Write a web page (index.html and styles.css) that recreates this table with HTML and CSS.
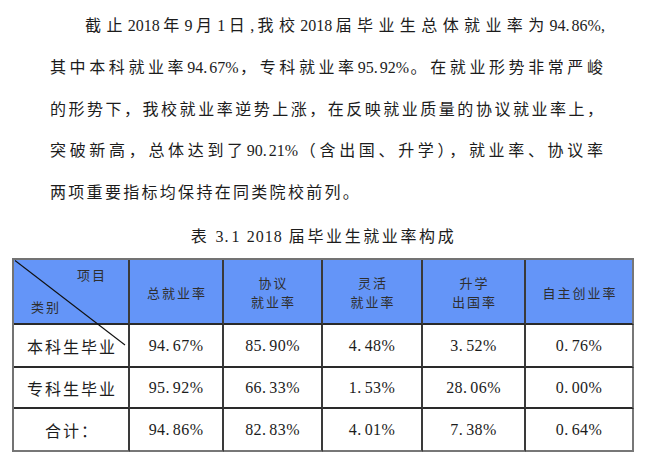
FILE: index.html
```html
<!DOCTYPE html>
<html lang="zh-CN">
<head>
<meta charset="utf-8">
<link rel="stylesheet" href="styles.css">
</head>
<body>
<div class="para">
  <div class="line first">截止<span class="n">2018</span>年<span class="n">9</span>月<span class="n">1</span>日<span class="n">,</span>我校<span class="n">2018</span>届毕业生总体就业率为<span class="n">94<span class="dot">.</span>86%,</span></div>
  <div class="line">其中本科就业率<span class="n">94<span class="dot">.</span>67%</span>，专科就业率<span class="n">95<span class="dot">.</span>92%</span>。在就业形势非常严峻</div>
  <div class="line">的形势下，我校就业率逆势上涨，在反映就业质量的协议就业率上，</div>
  <div class="line">突破新高，总体达到了<span class="n">90<span class="dot">.</span>21%</span>（含出国、升学），就业率、协议率</div>
  <div class="line last">两项重要指标均保持在同类院校前列。</div>
</div>
<div class="title">表 <span class="n">3<span class="dot">.</span>1</span> <span class="n">2018</span> 届毕业生就业率构成</div>
<div class="table">
  <div class="cell head corner">
    <div class="c-top">项目</div>
    <div class="c-bottom">类别</div>
  </div>
  <div class="cell head">总就业率</div>
  <div class="cell head"><div>协议</div><div>就业率</div></div>
  <div class="cell head"><div>灵活</div><div>就业率</div></div>
  <div class="cell head"><div>升学</div><div>出国率</div></div>
  <div class="cell head endcol">自主创业率</div>

  <div class="cell label">本科生毕业</div>
  <div class="cell num">94<span class="dot">.</span>67%</div>
  <div class="cell num">85<span class="dot">.</span>90%</div>
  <div class="cell num">4<span class="dot">.</span>48%</div>
  <div class="cell num">3<span class="dot">.</span>52%</div>
  <div class="cell num endcol">0<span class="dot">.</span>76%</div>

  <div class="cell label">专科生毕业</div>
  <div class="cell num">95<span class="dot">.</span>92%</div>
  <div class="cell num">66<span class="dot">.</span>33%</div>
  <div class="cell num">1<span class="dot">.</span>53%</div>
  <div class="cell num">28<span class="dot">.</span>06%</div>
  <div class="cell num endcol">0<span class="dot">.</span>00%</div>

  <div class="cell label endrow">合计：</div>
  <div class="cell num endrow">94<span class="dot">.</span>86%</div>
  <div class="cell num endrow">82<span class="dot">.</span>83%</div>
  <div class="cell num endrow">4<span class="dot">.</span>01%</div>
  <div class="cell num endrow">7<span class="dot">.</span>38%</div>
  <div class="cell num endrow endcol">0<span class="dot">.</span>64%</div>

  <svg class="diag" width="120" height="90" viewBox="0 0 120 90"><line x1="1" y1="0.5" x2="111" y2="85" stroke="#111" stroke-width="1.1"/></svg>
</div>
</body>
</html>
```
FILE: styles.css
```css
html, body {
  margin: 0;
  padding: 0;
  background: #ffffff;
}
body {
  width: 647px;
  height: 461px;
  overflow: hidden;
  color: #1c1c1c;
  font-family: "Noto Sans CJK SC", "Liberation Serif", sans-serif;
}
.n {
  font-family: "Liberation Serif", serif;
  letter-spacing: 0;
}
.dot {
  padding-right: 2px;
}
.para {
  padding: 4px 42px 0 50px;
  font-size: 16px;
  letter-spacing: 2px;
  line-height: 41px;
}
.line {
  text-align: justify;
  text-align-last: justify;
  white-space: nowrap;
}
.line.first {
  text-indent: 35px;
}
.line.last {
  text-align-last: left;
  letter-spacing: 2.3px;
}
.title {
  margin-top: 13px;
  text-align: center;
  font-size: 16px;
  line-height: 20px;
  letter-spacing: 2.6px;
}
.title .n {
  letter-spacing: 1px;
}
.table {
  position: relative;
  margin: 11px 0 0 12px;
  width: 620px;
  display: grid;
  grid-template-columns: 116px 94px 99px 100px 103px 108px;
  grid-template-rows: 65px 43px 41px 43px;
  border-left: 2px solid #737373;
  border-top: 2px solid #737373;
}
.cell {
  box-sizing: border-box;
  border-right: 2px solid #3a3a3a;
  border-bottom: 2px solid #2a2a2a;
  display: flex;
  flex-direction: column;
  align-items: center;
  justify-content: center;
  text-align: center;
}
.cell.endcol {
  border-right-color: #777777;
}
.cell.endrow {
  border-bottom-color: #777777;
}
.head {
  background: #6495f8;
  color: #2e2e2e;
  font-size: 13px;
  line-height: 19px;
  letter-spacing: 2px;
  padding-left: 2px;
  padding-top: 1px;
}
.corner {
  display: block;
  text-align: left;
  padding: 5px 0 0 0;
}
.c-top {
  padding-left: 63px;
  line-height: 19px;
}
.c-bottom {
  padding-left: 17px;
  margin-top: 13px;
  line-height: 19px;
}
.label {
  font-size: 16px;
  letter-spacing: 2px;
  padding-left: 2px;
}
.num {
  font-family: "Liberation Serif", serif;
  font-size: 16px;
  letter-spacing: 0.4px;
  flex-direction: row;
}
.num .dot {
  padding-right: 3px;
}
.diag {
  position: absolute;
  left: 0;
  top: 0;
}
```
